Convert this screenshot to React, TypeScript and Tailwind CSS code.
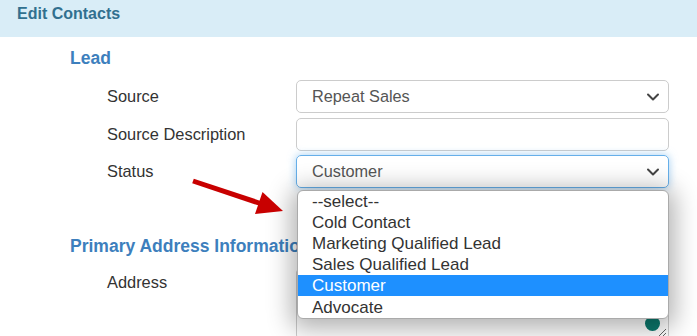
import React from 'react';

const Chevron = () => (
  <svg className="absolute right-[8px] top-1/2 -translate-y-1/2 w-[14px] h-[10px]" viewBox="0 0 14 10" fill="none">
    <path d="M2 2.5l5 5 5-5" stroke="#444" strokeWidth="2" strokeLinecap="round" strokeLinejoin="round" />
  </svg>
);

const options = ['--select--', 'Cold Contact', 'Marketing Qualified Lead', 'Sales Qualified Lead', 'Customer', 'Advocate'];

export default function App() {
  return (
    <div className="relative w-[697px] h-[336px] overflow-hidden bg-white font-['Liberation_Sans',Arial,sans-serif]">
      {/* Header */}
      <div className="h-[37px] bg-[#d9edf7] flex items-start pt-[4px] pl-[17px] text-[16px] leading-[20px] font-bold text-[#31708f]">
        Edit Contacts
      </div>

      <div className="pl-[70px] pr-[28px]">
        <h3 className="mt-[11px] h-[20px] text-[17.5px] leading-[20px] font-bold text-[#3d7fbd]">Lead</h3>

        <div className="mt-[12px] flex flex-col gap-[4.5px]">
          <div className="flex items-center">
            <div className="w-[226px] pl-[37px] text-[16.4px] text-[#333]">Source</div>
            <div className="relative flex-1 h-[33px] border border-[#ccc] rounded-[5px] flex items-center pl-[15px] text-[16.3px] text-[#555]">
              Repeat Sales
              <Chevron />
            </div>
          </div>
          <div className="flex items-center">
            <div className="w-[226px] pl-[37px] text-[16.4px] text-[#333]">Source Description</div>
            <div className="flex-1 h-[33px] border border-[#ccc] rounded-[5px]" />
          </div>
          <div className="flex items-center">
            <div className="w-[226px] pl-[37px] text-[16.4px] text-[#333]">Status</div>
            <div className="relative flex-1 h-[33px] border border-[#66afe9] rounded-[5px] flex items-center pl-[15px] text-[16.3px] text-[#555] shadow-[0_0_8px_rgba(102,175,233,0.6)]">
              Customer
              <Chevron />
            </div>
          </div>
        </div>

        <h3 className="mt-[48px] h-[20px] text-[17.5px] leading-[20px] font-bold text-[#3d7fbd] whitespace-nowrap">
          Primary Address Information
        </h3>

        <div className="mt-[12px] flex items-start">
          <div className="w-[226px] pl-[37px] pt-[2px] text-[16.4px] text-[#333]">Address</div>
          <div className="relative flex-1 h-[72px] border border-[#ccc] rounded-[5px]">
            <span className="absolute right-[8px] bottom-[8px] w-[15px] h-[15px] rounded-full bg-[#0b7a6e]" />
            <svg className="absolute right-[1px] bottom-[1px] w-[12px] h-[12px]" viewBox="0 0 12 12">
              <path d="M11 3L3 11M11 7L7 11" stroke="#666" strokeWidth="1" />
            </svg>
          </div>
        </div>
      </div>

      {/* Open dropdown list */}
      <div className="absolute left-[297px] top-[190px] w-[372px] border border-[#aaa] rounded-[6px] bg-white overflow-hidden shadow-[0_4px_24px_6px_rgba(0,0,0,0.3)]">
        {options.map((o) => (
          <div
            key={o}
            className={`h-[21.1px] flex items-center pl-[14px] text-[17px] leading-none ${
              o === 'Customer' ? 'bg-[#1e90ff] text-white' : 'text-[#333]'
            }`}
          >
            {o}
          </div>
        ))}
      </div>

      {/* Red pointer arrow */}
      <svg className="absolute left-0 top-0 w-[697px] h-[336px] pointer-events-none" viewBox="0 0 697 336">
        <line x1="193" y1="181" x2="262" y2="204" stroke="#c80000" strokeWidth="5" />
        <polygon points="283,211 262.5,192 255,214" fill="#c80000" />
      </svg>
    </div>
  );
}
